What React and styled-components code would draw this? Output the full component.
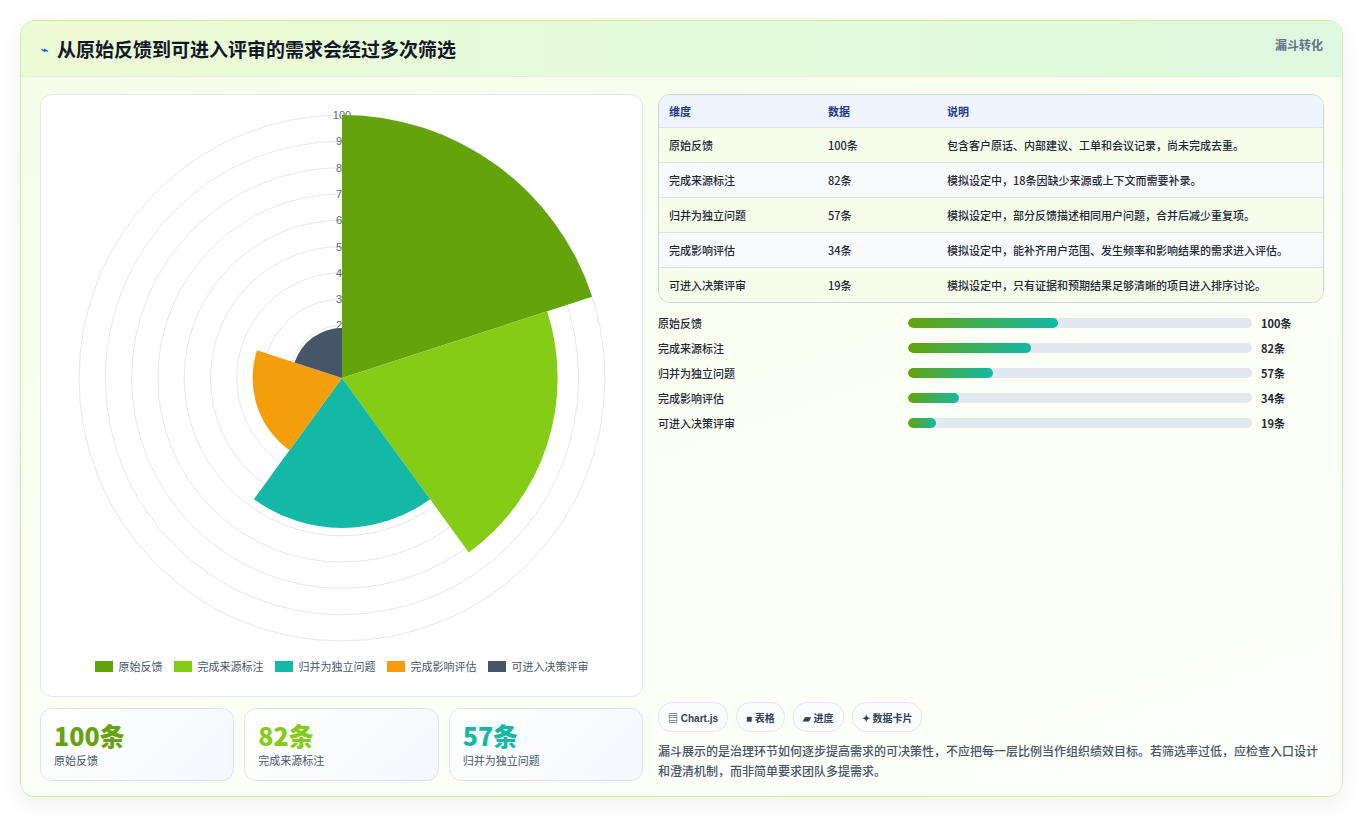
import React from "react";
import styled, { createGlobalStyle } from "styled-components";

const Global = createGlobalStyle`
  html, body { margin: 0; background: #fff; }
  body { font-family: "Noto Sans CJK SC", "Noto Sans", sans-serif; color: #1f2937; }
`;

const rows = [
  { name: "原始反馈", v: 100, color: "#65a30d", desc: "包含客户原话、内部建议、工单和会议记录，尚未完成去重。" },
  { name: "完成来源标注", v: 82, color: "#84cc16", desc: "模拟设定中，18条因缺少来源或上下文而需要补录。" },
  { name: "归并为独立问题", v: 57, color: "#14b8a6", desc: "模拟设定中，部分反馈描述相同用户问题，合并后减少重复项。" },
  { name: "完成影响评估", v: 34, color: "#f59e0b", desc: "模拟设定中，能补齐用户范围、发生频率和影响结果的需求进入评估。" },
  { name: "可进入决策评审", v: 19, color: "#475569", desc: "模拟设定中，只有证据和预期结果足够清晰的项目进入排序讨论。" },
];

const Page = styled.div`
  padding: 20px 20px 20px 20px;
`;
const Card = styled.div`
  border: 1px solid #cfeeaa;
  border-radius: 14px;
  background: linear-gradient(160deg, #f5fde8 0%, #fbfff3 50%, #fdfffa 100%);
  box-shadow: 0 8px 24px rgba(0,0,0,0.06);
  overflow: hidden;
  height: 777px;
  box-sizing: border-box;
`;
const Header = styled.div`
  height: 55px;
  display: flex;
  align-items: flex-start;
  justify-content: space-between;
  padding: 0 19px 0 20px;
  background: linear-gradient(90deg, #ecfbd5, #def9df);
  border-bottom: 1px solid #e3f0d3;
`;
const Title = styled.h1`
  margin: 14px 0 0;
  font-size: 19px;
  font-weight: 700;
  color: #111827;
  display: flex;
  align-items: center;
  gap: 9px;
`;
const Tag = styled.span`
  margin-top: 15px;
  font-size: 12px;
  font-weight: 700;
  color: #64748b;
`;
const Body = styled.div`
  display: grid;
  grid-template-columns: 603px 666px;
  gap: 15px;
  padding: 17px 19px 0 19px;
`;
const Col = styled.div`
  display: flex;
  flex-direction: column;
`;
const ChartCard = styled.div`
  background: #fff;
  border: 1px solid #e2e8f0;
  border-radius: 12px;
  height: 601px;
  position: relative;
`;
const Legend = styled.div`
  position: absolute;
  left: 0; right: 0; top: 563px;
  display: flex;
  justify-content: center;
  gap: 11px;
  font-size: 11px;
  color: #475569;
`;
const LegendItem = styled.span`
  display: flex; align-items: center; gap: 6px;
  &::before { content: ""; width: 18px; height: 11px; background: ${p => p.$c}; }
`;
const Stats = styled.div`
  display: grid;
  grid-template-columns: repeat(3, 1fr);
  gap: 10px;
  margin-top: 11px;
`;
const Stat = styled.div`
  border: 1px solid #dbe4ee;
  border-radius: 12px;
  background: linear-gradient(135deg, #fff, #f4f8fd);
  height: 73px;
  box-sizing: border-box;
  padding: 9px 13px;
`;
const StatNum = styled.div`
  font-size: 25px; font-weight: 800; color: ${p => p.$c}; line-height: 34px;
`;
const StatLabel = styled.div`font-size: 11px; color: #475569;`;
const Table = styled.table`
  width: 100%;
  border-collapse: separate;
  border-spacing: 0;
  border: 1px solid #cbd5e1;
  border-radius: 12px;
  overflow: hidden;
  font-size: 11px;
  th { background: #eef5fe; color: #1e3a8a; text-align: left; font-weight: 700; height: 32px; padding: 0 10px; }
  td { padding: 8px 10px; border-top: 1px solid #dde3ea; color: #1f2937; line-height: 18px; font-weight: 500; }
  tr:nth-child(odd) td { background: #f6fdea; }
  tr:nth-child(even) td { background: #f8fafc; }
`;
const Bars = styled.div`
  display: flex; flex-direction: column; gap: 7px; margin-top: 11px; width: 634px;
`;
const BarRow = styled.div`
  display: grid; grid-template-columns: 250px 344px 40px; align-items: center;
  font-size: 11px; height: 18px; font-weight: 500;
  b { padding-left: 9px; font-weight: 700; }
`;
const Track = styled.div`
  height: 10px; border-radius: 5px; background: #e2e8f0; overflow: hidden;
`;
const Fill = styled.div`
  height: 100%; border-radius: 5px; background: linear-gradient(90deg, #65a30d, #14b8a6);
`;
const Chips = styled.div`
  display: flex; gap: 8px; margin-top: auto;
`;
const Chip = styled.span`
  height: 28px; padding: 0 9px; border: 1px solid #e2e8f0; border-radius: 14px;
  background: #fafcfe; display: flex; align-items: center; gap: 4px;
  font-size: 10px; font-weight: 700; color: #334155;
  font-family: "Liberation Sans", "Noto Sans CJK SC", sans-serif;
`;
const Note = styled.p`
  margin: 9px 0 0; font-size: 12px; line-height: 20px; color: #475569; font-weight: 500;
`;

function Polar() {
  const cx = 301, cy = 283, R = 263;
  const arc = (v, i) => {
    const r = (v / 100) * R;
    const a0 = -Math.PI / 2 + (i * 2 * Math.PI) / 5;
    const a1 = a0 + (2 * Math.PI) / 5;
    return `M${cx} ${cy} L${cx + r * Math.cos(a0)} ${cy + r * Math.sin(a0)} A${r} ${r} 0 0 1 ${cx + r * Math.cos(a1)} ${cy + r * Math.sin(a1)} Z`;
  };
  return (
    <svg width="602" height="560" style={{ display: "block" }}>
      {[...Array(10)].map((_, k) => (
        <circle key={k} cx={cx} cy={cy} r={(R * (k + 1)) / 10} fill="none" stroke="#e5e7eb" />
      ))}
      {[...Array(10)].map((_, k) => (
        <text key={k} x={cx} y={cy - (R * (k + 1)) / 10 + 4} fontSize="11" fill="#666" textAnchor="middle" fontFamily="Liberation Sans, sans-serif">{(k + 1) * 10}</text>
      ))}
      {rows.map((r, i) => <path key={i} d={arc(r.v, i)} fill={r.color} />)}
    </svg>
  );
}

export default function App() {
  return (
    <Page>
      <Global />
      <Card>
        <Header>
          <Title><span style={{ color: "#2563eb", fontSize: 12 }}>⌁</span>从原始反馈到可进入评审的需求会经过多次筛选</Title>
          <Tag>漏斗转化</Tag>
        </Header>
        <Body>
          <Col>
            <ChartCard>
              <Polar />
              <Legend>
                {rows.map(r => <LegendItem key={r.name} $c={r.color}>{r.name}</LegendItem>)}
              </Legend>
            </ChartCard>
            <Stats>
              {rows.slice(0, 3).map(r => (
                <Stat key={r.name}><StatNum $c={r.color}>{r.v}条</StatNum><StatLabel>{r.name}</StatLabel></Stat>
              ))}
            </Stats>
          </Col>
          <Col>
            <Table>
              <thead><tr><th style={{ width: 139 }}>维度</th><th style={{ width: 99 }}>数据</th><th>说明</th></tr></thead>
              <tbody>
                {rows.map(r => (
                  <tr key={r.name}><td>{r.name}</td><td>{r.v}条</td><td>{r.desc}</td></tr>
                ))}
              </tbody>
            </Table>
            <Bars>
              {rows.map(r => (
                <BarRow key={r.name}>
                  <span>{r.name}</span>
                  <Track><Fill style={{ width: `${(r.v / 100) * 43.5}%` }} /></Track>
                  <b>{r.v}条</b>
                </BarRow>
              ))}
            </Bars>
            <Chips>
              <Chip>▤ Chart.js</Chip>
              <Chip>■ 表格</Chip>
              <Chip>▰ 进度</Chip>
              <Chip>✦ 数据卡片</Chip>
            </Chips>
            <Note>漏斗展示的是治理环节如何逐步提高需求的可决策性，不应把每一层比例当作组织绩效目标。若筛选率过低，应检查入口设计和澄清机制，而非简单要求团队多提需求。</Note>
          </Col>
        </Body>
      </Card>
    </Page>
  );
}
